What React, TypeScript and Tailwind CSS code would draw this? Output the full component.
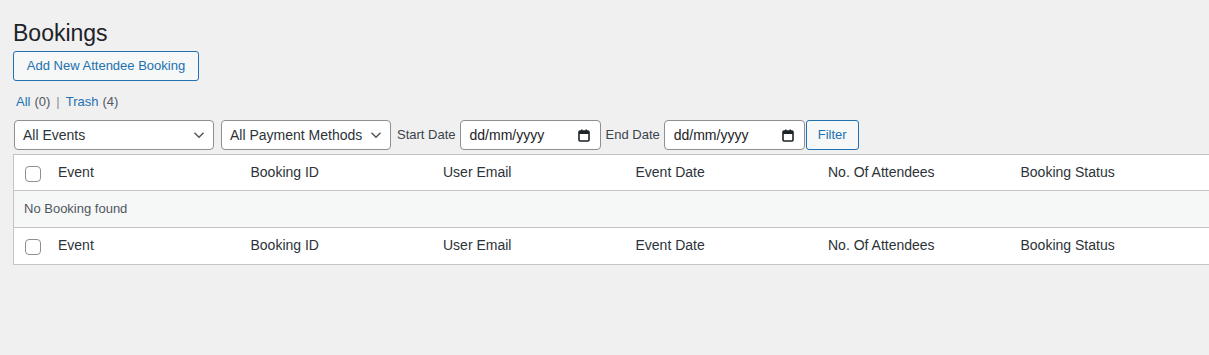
import React from "react"

const columns = ["Event", "Booking ID", "User Email", "Event Date", "No. Of Attendees", "Booking Status"]

function Chevron() {
    return (
        <svg width="12" height="8" viewBox="0 0 12 8" fill="none">
            <path d="M1.5 1.8 L6 6.2 L10.5 1.8" stroke="#50575e" strokeWidth="1.5" />
        </svg>
    )
}

function CalendarIcon() {
    return (
        <svg width="12" height="13" viewBox="0 0 12 13" fill="none">
            <rect x="1" y="2" width="10" height="10" rx="1" stroke="#1d2327" strokeWidth="1.6" />
            <rect x="1" y="2" width="10" height="3" fill="#1d2327" />
            <rect x="3" y="0.5" width="1.5" height="2.5" fill="#1d2327" />
            <rect x="7.5" y="0.5" width="1.5" height="2.5" fill="#1d2327" />
        </svg>
    )
}

function Checkbox() {
    return <div className="w-4 h-4 mt-[3px] rounded-[4px] border border-[#8c8f94] bg-white" />
}

function Select({ label, width }: { label: string; width: string }) {
    return (
        <div className={`${width} h-[30px] flex items-center justify-between pl-[8px] pr-[8px] bg-white border border-[#8c8f94] rounded-[4px] text-[14px] text-[#2c3338]`}>
            <span>{label}</span>
            <Chevron />
        </div>
    )
}

function DateInput() {
    return (
        <div className="w-[141px] h-[30px] flex items-center justify-between pl-[9px] pr-[10px] bg-white border border-[#8c8f94] rounded-[4px] text-[14px] text-[#1d2327]">
            <span>dd/mm/yyyy</span>
            <CalendarIcon />
        </div>
    )
}

function HeaderRow({ border }: { border: boolean }) {
    return (
        <div className={`grid grid-cols-[35px_192.5px_192.5px_192.5px_192.5px_192.5px_1fr] items-center text-[14px] text-[#2c3338] ${border ? "h-[36px] border-b border-[#c3c4c7]" : "h-[36px] pb-[1px]"}`}>
            <div className="pl-[11px]">
                <Checkbox />
            </div>
            {columns.map((c) => (
                <div key={c} className="pl-[9px]">{c}</div>
            ))}
        </div>
    )
}

export default function App() {
    return (
        <div className="min-h-screen overflow-hidden bg-[#f0f0f1] pl-[13px] pt-[18px]" style={{ fontFamily: '"Liberation Sans", Arial, sans-serif' }}>
            <h1 className="text-[23px] leading-[30px] text-[#1d2327]">Bookings</h1>

            <button className="mt-[3px] h-[30px] w-[186px] rounded-[3px] border border-[#2271b1] bg-[#f6f7f7] text-[13px] text-[#2271b1]">
                Add New Attendee Booking
            </button>

            <div className="mt-[11px] pl-[3px] h-[20px] flex items-center text-[13px] text-[#50575e]">
                <span className="text-[#2271b1]">All</span>
                <span className="ml-[4px]">(0)</span>
                <span className="mx-[6px] text-[#8c8f94]">|</span>
                <span className="text-[#2271b1]">Trash</span>
                <span className="ml-[4px]">(4)</span>
            </div>

            <div className="mt-[8px] flex items-center text-[13px] text-[#3c434a]">
                <div className="ml-[1px]">
                    <Select label="All Events" width="w-[200px]" />
                </div>
                <div className="ml-[7px]">
                    <Select label="All Payment Methods" width="w-[170px]" />
                </div>
                <span className="ml-[6px] mr-[4px]">Start Date</span>
                <DateInput />
                <span className="ml-[5px] mr-[4px]">End Date</span>
                <DateInput />
                <button className="ml-[1px] h-[30px] w-[53px] rounded-[3px] border border-[#2271b1] bg-[#f6f7f7] text-[13px] text-[#2271b1]">
                    Filter
                </button>
            </div>

            <div className="mt-[4px] w-[1230px] bg-white border border-[#c3c4c7]">
                <HeaderRow border />
                <div className="h-[37px] flex items-center pl-[10px] bg-[#f6f7f7] border-b border-[#c3c4c7] text-[13px] text-[#50575e]">
                    No Booking found
                </div>
                <HeaderRow border={false} />
            </div>
        </div>
    )
}
